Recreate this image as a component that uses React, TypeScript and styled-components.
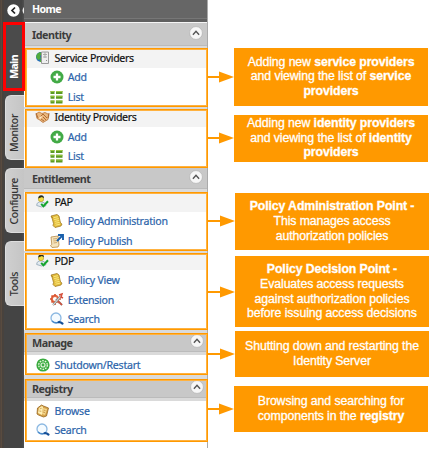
import React from 'react';
import styled, { createGlobalStyle } from 'styled-components';

const orange = '#ff9900';

const Global = createGlobalStyle`
  * { box-sizing: border-box; }
  body { margin: 0; background: #fff; overflow: hidden; }
`;

const Page = styled.div`
  width: 434px;
  height: 451px;
  display: flex;
  align-items: flex-start;
  background: #fff;
  font-family: 'Noto Sans', 'Open Sans', sans-serif;
  overflow: hidden;
`;

const Rail = styled.nav`
  width: 24px;
  height: 448px;
  flex: none;
  display: flex;
  flex-direction: column;
  background: linear-gradient(90deg, #51463e 0 1px, #594b3f 1px 2px, #48423d 2px 4px, #444 4px 22px, #4d4d4d 23px 24px);
`;

const RailTop = styled.div`
  height: 22px;
  flex: none;
  padding: 3px 0 0 7px;
  overflow: hidden;
`;

const ActiveTab = styled.div`
  position: relative;
  z-index: 2;
  width: 22px;
  height: 69px;
  flex: none;
  margin-left: 3px;
  border: 3px solid #ff0000;
  background: #4b4b4b;
  display: flex;
  align-items: center;
  justify-content: center;
  padding-top: 22px;
`;

const Tab = styled.div<{ $gap: number; $shift: number }>`
  width: 19px;
  height: 65px;
  flex: none;
  margin: ${p => p.$gap}px 0 0 5px;
  padding: ${p => p.$shift}px 2px 0 0;
  border-radius: 6px 0 0 6px;
  border: 1px solid #dedede;
  border-right: 0;
  background: linear-gradient(90deg, #cfcfcf, #c5c5c5);
  display: flex;
  align-items: center;
  justify-content: center;
`;

const TabText = styled.span<{ $active?: boolean }>`
  writing-mode: vertical-rl;
  transform: rotate(180deg);
  white-space: nowrap;
  font-size: 10.6px;
  line-height: 14px;
  font-weight: ${p => (p.$active ? 800 : 500)};
  letter-spacing: ${p => (p.$active ? '-0.7px' : '-0.4px')};
  color: ${p => (p.$active ? '#fff' : '#333')};
`;

const Panel = styled.aside`
  width: 184px;
  height: 448px;
  flex: none;
  border-right: 1px solid #aaa;
  background: #fff;
`;

const Home = styled.div`
  height: 23px;
  padding: 0 0 6px 8px;
  display: flex;
  align-items: center;
  background: linear-gradient(#666 0 18px, #777 18px 19px, #606060 19px 22px, #f5f5f5 22px 23px);
  color: #fff;
  font-size: 10.6px;
  font-weight: 700;
  letter-spacing: -0.6px;
`;

const Header = styled.div<{ $height: number; $band: number }>`
  height: ${p => p.$height}px;
  padding: 0 4px ${p => p.$height - p.$band}px 8px;
  display: flex;
  align-items: center;
  justify-content: space-between;
  background: linear-gradient(#c8c8c8 0 ${p => p.$band}px, #bbb ${p => p.$band}px ${p => p.$band + 1}px, #dadada ${p => p.$band + 1}px);
  color: #3c3c3c;
  font-size: 10.8px;
  font-weight: 700;
  letter-spacing: -0.5px;
`;

const Frame = styled.section<{ $height: number }>`
  position: relative;
  width: 184px;
  height: ${p => p.$height}px;
  &::after {
    content: '';
    position: absolute;
    inset: 0 0 0 1px;
    border: 1px solid ${orange};
    box-shadow: inset 0 0 0 1px #ffb240;
  }
`;

const Gap = styled.div<{ $height: number }>`
  height: ${p => p.$height}px;
  background: #dadada;
`;

const Row = styled.div<{ $head?: boolean; $indent?: boolean; $cut?: number }>`
  height: ${p => 19.5 - (p.$cut || 0)}px;
  padding: 0 0 ${p => p.$cut || 0}px ${p => (p.$indent ? 25.5 : 12.3)}px;
  display: flex;
  align-items: center;
  gap: 4.2px;
  background: ${p => (p.$head ? '#f3f3f3' : '#fff')};
  color: ${p => (p.$head ? '#111' : '#2c64aa')};
  font-size: 10.6px;
  line-height: 16px;
  letter-spacing: ${p => (p.$head ? '-0.33px' : '-0.25px')};
  -webkit-text-stroke: 0.2px currentColor;
  white-space: nowrap;
`;

const Glyph = styled.svg`
  width: 14px;
  height: 14px;
  flex: none;
  display: block;
  overflow: visible;
`;

const CollapseGlyph = styled(Glyph)`
  margin-bottom: 3px;
`;

const Notes = styled.main`
  width: 226px;
  flex: none;
  padding-top: 48px;
`;

const Note = styled.div<{ $before: number; $height: number; $inset: number }>`
  display: flex;
  align-items: center;
  height: ${p => p.$height}px;
  margin-top: ${p => p.$before}px;
  padding-left: ${p => p.$inset}px;
`;

const Arrow = styled.svg`
  width: 26px;
  height: 12px;
  flex: none;
  display: block;
  overflow: visible;
`;

const NoteBox = styled.div`
  width: 194px;
  height: 100%;
  flex: none;
  display: flex;
  align-items: center;
  justify-content: center;
  background: ${orange};
  color: #fff;
  text-align: center;
  white-space: nowrap;
  font-family: 'Liberation Sans', Arial, sans-serif;
  font-size: 12.3px;
  line-height: 14.6px;
  letter-spacing: -0.1px;
  -webkit-text-stroke: 0.3px #fff;
`;

type IconName = 'server' | 'add' | 'list' | 'hands' | 'user' | 'scroll' | 'publish' | 'tools' | 'search' | 'power' | 'book';

const Icon = ({ name }: { name: IconName }) => (
  <Glyph viewBox="0 0 14 14" fill="none">
    {name === 'server' && <>
      <circle cx="5" cy="6" r="5" fill="#2871b5" />
      <path d="M1 3l3-2 2 2-2 2 1 3-3 1-2-3zM4 8l2 3H4z" fill="#52ad3b" />
      <path d="M5.5 1h7v11.5h-7z" fill="#eee" stroke="#9a9a9a" />
      <path d="M7 3.5h4M7 6h4M9 1v6" stroke="#aaa" /><path d="M10 9h1v1h-1z" fill="#8c8c8c" />
    </>}
    {name === 'add' && <>
      <circle cx="7" cy="7" r="6.5" fill="#42aa46" /><path d="M7 3.5v7M3.5 7h7" stroke="#fff" strokeWidth="2.3" />
    </>}
    {name === 'list' && [1, 5.7, 10.4].map(y => <g key={y}>
      <path d={`M.5 ${y}h4v3h-4zM6 ${y}h6.5v3H6z`} fill="#5c9a22" /><path d={`M.5 ${y}h4v1h-4zM6 ${y}h6.5v1H6z`} fill="#9ac840" />
    </g>)}
    {name === 'hands' && <>
      <path d="M0 4l3-2 3 1.5 3-1 4 2-1 5-5 3-4-3-2-1z" fill="#eab77e" stroke="#b87538" strokeWidth=".8" />
      <path d="M4 7l3-3 4 4M5 9l3 2M7 7l3 3M0 3l2 5M13 3l-1 5" stroke="#a9642b" strokeWidth=".9" />
      <path d="M3 8l2-2 1 1-2 2z" fill="#fff0cf" />
    </>}
    {name === 'user' && <>
      <path d="M.7 10.5Q.7 6.8 5 6.8t5 4q-4.5 2.4-9.3-.3z" fill="#e2eaf0" stroke="#8ca2b3" strokeWidth=".8" />
      <circle cx="5" cy="4" r="2.7" fill="#f0dc42" stroke="#b09a28" strokeWidth=".6" /><path d="M2.3 3.5q0-3.2 2.9-3.2t2.7 3L6 2z" fill="#292b1c" />
      <path d="M5.2 8.8l2.2 2.5 4.6-5" stroke="#16a52d" strokeWidth="2" />
    </>}
    {name === 'scroll' && <>
      <path d="M1 2l6-1.5 2 1.5 1.5 7L12 10l-1 2-6 1.5-2-2 .5-2L2 4z" fill="#e3bd3e" stroke="#9a7119" strokeWidth=".7" />
      <path d="M3.5 3.7l4.5-1M4.2 5.6l4.5-1M4.8 7.4l4.5-1M5.2 9.3l4.5-1M5.5 11.2l4.5-1" stroke="#fff08a" strokeWidth=".8" /><path d="M1 2l2 1.5-1 .8" fill="#a87a1c" />
    </>}
    {name === 'publish' && <>
      <path d="M1 3l7-1 1 9-1 2-6 .5-1.5-2 1.3-1z" fill="#f4e4be" stroke="#b68a49" strokeWidth=".8" />
      <path d="M3 5l4-.5M3.3 7l4-.5M3.6 9l3.5-.5" stroke="#c69b5b" strokeWidth=".8" /><path d="M7 7l5-5M8 1h5v5" stroke="#1a60ac" strokeWidth="1.9" />
    </>}
    {name === 'tools' && <>
      <circle cx="5" cy="6" r="3.2" stroke="#e36843" strokeWidth="2.2" /><path d="M5 1v2M5 9v3M0 6h2M8 6h3M1.5 2.5L3 4M7 8l2 2M1.5 9.5L3 8" stroke="#d75431" strokeWidth="1.6" />
      <path d="M3 12L11 3M6 6l6 6" stroke="#8a9291" strokeWidth="2" /><path d="M3 12L11 3" stroke="#f7f7f7" strokeWidth=".8" /><path d="M9 2l3-1-1 3 2 1M8 8l4 4" stroke="#d64d39" strokeWidth="1.5" />
    </>}
    {name === 'search' && <>
      <circle cx="6" cy="6" r="5" fill="#f5fbff" stroke="#8bb8e2" strokeWidth="1.3" />
      <path d="M2 9q2.6 2.5 6.5 1.4" stroke="#4b8bcb" strokeWidth="1.3" />
      <path d="M8.5 10.2q1.8-.6 4 1.4" stroke="#144f98" strokeWidth="2.2" strokeLinecap="round" />
    </>}
    {name === 'power' && <>
      <circle cx="7" cy="7" r="6.6" fill="#39ab3e" /><circle cx="7" cy="7" r="4.3" stroke="#e6f8dd" strokeWidth="1.3" strokeDasharray="1.7 1" /><circle cx="7" cy="7" r="2.6" fill="#e0f3d9" /><circle cx="7" cy="7" r="1.4" fill="#3da846" />
    </>}
    {name === 'book' && <>
      <path d="M1.5 4l4-3 2 1 5 2-2 8-3 1-5-2-1.5-1z" fill="#d5a34a" stroke="#97651f" strokeWidth=".8" />
      <path d="M3 4l3-2 1 1-1 8-4-2z" fill="#fff0b5" /><path d="M7 4l4 1-2 6-3-1z" fill="#f4d58b" /><path d="M3.7 5l2-.8M3.3 7l2 .3M7.5 6l2 .6M7 8l2 .6" stroke="#b98436" strokeWidth=".7" />
    </>}
  </Glyph>
);

const Collapse = () => (
  <CollapseGlyph viewBox="0 0 14 14">
    <circle cx="7" cy="7" r="6.4" fill="#f7f7f7" stroke="#aaa" strokeWidth=".6" />
    <path d="M3.9 8.8L7 5.3l3.1 3.5" fill="none" stroke="#555" strokeWidth="1.4" />
  </CollapseGlyph>
);

const Section = ({ title, height, band }: { title: string; height: number; band: number }) => (
  <Header $height={height} $band={band}><span>{title}</span><Collapse /></Header>
);

const Item = ({ icon, children, indent, head, cut }: { icon: IconName; children: string; indent?: boolean; head?: boolean; cut?: number }) => (
  <Row $indent={indent} $head={head} $cut={cut}><Icon name={icon} />{children}</Row>
);

const Callout = ({ before, height, children, inset = 0 }: { before: number; height: number; children: React.ReactNode; inset?: number }) => (
  <Note $before={before} $height={height} $inset={inset}>
    <Arrow viewBox="0 0 26 12"><path d="M-1 6h14" stroke={orange} strokeWidth="2" /><path d="M11 .5l15 5.5-15 5.5z" fill={orange} /></Arrow>
    <NoteBox><div>{children}</div></NoteBox>
  </Note>
);

export default function App() {
  return (
    <Page>
      <Global />
      <Rail>
        <RailTop>
          <Glyph viewBox="0 0 14 14">
            <circle cx="6.5" cy="7.5" r="6.2" fill="#fff" />
            <path d="M8 4.5l-3 3 3 3" fill="none" stroke="#222" strokeWidth="1.7" />
            <path d="M17 4q-3 3.5 0 7z" fill="#eee" />
          </Glyph>
        </RailTop>
        <ActiveTab><TabText $active>Main</TabText></ActiveTab>
        <Tab $gap={4} $shift={10}><TabText>Monitor</TabText></Tab>
        <Tab $gap={8} $shift={1}><TabText>Configure</TabText></Tab>
        <Tab $gap={8} $shift={21}><TabText>Tools</TabText></Tab>
      </Rail>
      <Panel>
        <Home>Home</Home>
        <Section title="Identity" height={25} band={22} />
        <Frame $height={59}>
          <Item icon="server" head>Service Providers</Item>
          <Item icon="add" indent>Add</Item>
          <Item icon="list" indent>List</Item>
        </Frame>
        <Gap $height={2} />
        <Frame $height={59}>
          <Item icon="hands" head cut={1.75}>Identity Providers</Item>
          <Item icon="add" indent>Add</Item>
          <Item icon="list" indent>List</Item>
        </Frame>
        <Section title="Entitlement" height={24} band={20} />
        <Frame $height={59}>
          <Item icon="user" head>PAP</Item>
          <Item icon="scroll" indent>Policy Administration</Item>
          <Item icon="publish" indent>Policy Publish</Item>
        </Frame>
        <Gap $height={2} />
        <Frame $height={77}>
          <Item icon="user" head cut={2.25}>PDP</Item>
          <Item icon="scroll" indent>Policy View</Item>
          <Item icon="tools" indent>Extension</Item>
          <Item icon="search" indent>Search</Item>
        </Frame>
        <Gap $height={3} />
        <Frame $height={42}>
          <Section title="Manage" height={22} band={18} />
          <Item icon="power">Shutdown/Restart</Item>
        </Frame>
        <Gap $height={4} />
        <Frame $height={63}>
          <Section title="Registry" height={22} band={18} />
          <Item icon="book">Browse</Item>
          <Item icon="search">Search</Item>
        </Frame>
      </Panel>
      <Notes>
        <Callout before={0} height={57.5}>Adding new <b>service providers</b><br />and viewing the list of <b>service</b><br /><b>providers</b></Callout>
        <Callout before={9} height={47}>Adding new <b>identity providers</b><br />and viewing the list of <b>identity</b><br /><b>providers</b></Callout>
        <Callout before={31} height={57.5} inset={1}><b>Policy Administration Point -</b><br />This manages access<br />authorization policies</Callout>
        <Callout before={6} height={71} inset={1}><b>Policy Decision Point -</b><br />Evaluates access requests<br />against authorization policies<br />before issuing access decisions</Callout>
        <Callout before={3.5} height={46.5} inset={1}>Shutting down and restarting the<br />Identity Server</Callout>
        <Callout before={9} height={46}>Browsing and searching for<br />components in the <b>registry</b></Callout>
      </Notes>
    </Page>
  );
}
